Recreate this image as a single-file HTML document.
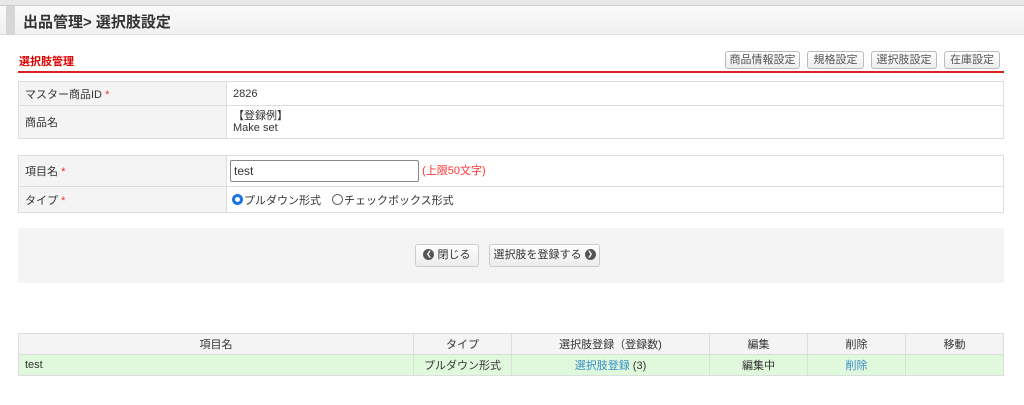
<!DOCTYPE html>
<html><head><meta charset="utf-8"><style>
*{box-sizing:border-box;margin:0;padding:0}
body{width:1024px;height:405px;background:#fff;font-family:"Liberation Sans","Noto Sans CJK JP",sans-serif;font-size:11px;color:#333;position:relative;overflow:hidden}
.abs{position:absolute}
.top{left:0;top:0;width:1024px;height:6px;background:#e8e8e8;border-bottom:1px solid #ccc}
.hdr{left:0;top:6px;width:1024px;height:29px;background:linear-gradient(#fafafa,#f0f0f0);border-bottom:1px solid #e0e0e0}
.hdr .mk{position:absolute;left:6px;top:0;width:9px;height:29px;background:#d6d6d6}
.hdr .t{position:absolute;left:23px;top:5px;font-size:15px;font-weight:bold;color:#333}
.sec{left:19px;top:53px;color:#d00;font-weight:bold;font-size:11px}
.red{left:18px;top:71px;width:986px;height:2px;background:#d22}
.tb{position:absolute;top:51px;height:18px;border:1px solid #bbb;border-radius:3px;background:linear-gradient(#fff,#ececec);font-size:11px;line-height:16px;text-align:center;color:#555}
table{position:absolute;border-collapse:collapse}
td{border:1px solid #ddd;padding:0 6px}
.lab{background:#f4f4f4;width:208px}
.star{color:#e33}
.panel{left:18px;top:228px;width:986px;height:55px;background:#f4f4f4}
.btn{position:absolute;top:244px;height:23px;border:1px solid #ccc;border-radius:3px;background:linear-gradient(#fff,#ececec);font-size:11px;line-height:21px;color:#333;white-space:nowrap;text-align:center}
.ic{display:inline-block;width:11px;height:11px;border-radius:50%;background:#555;color:#fff;font-size:7px;line-height:11px;text-align:center;vertical-align:middle;position:relative;top:-1px}
.t3 td{text-align:center;height:21px}
.t3 tr.h td{background:#f4f4f4;height:21px}
.t3 tr.d td{background:#e0f8dc}
a{color:#3a8fc8;text-decoration:none}
</style></head><body>
<div class="abs top"></div>
<div class="abs hdr"><div class="mk"></div><div class="t">出品管理&gt; 選択肢設定</div></div>
<div class="abs sec">選択肢管理</div>
<div class="abs red"></div>
<div class="tb" style="left:725px;width:75px">商品情報設定</div>
<div class="tb" style="left:807px;width:57px">規格設定</div>
<div class="tb" style="left:871px;width:66px">選択肢設定</div>
<div class="tb" style="left:944px;width:56px">在庫設定</div>

<table style="left:18px;top:81px;width:986px">
<tr style="height:24px"><td class="lab">マスター商品ID <span class="star">*</span></td><td>2826</td></tr>
<tr style="height:33px"><td class="lab">商品名</td><td style="line-height:12px">【登録例】<br>Make set</td></tr>
</table>

<table style="left:18px;top:155px;width:986px">
<tr style="height:31px"><td class="lab">項目名 <span class="star">*</span></td><td style="padding-left:3px"><span style="display:inline-block;width:189px;height:22px;border:1px solid #888;border-radius:2px;padding:3px 3px;font-size:12px;vertical-align:middle">test</span> <span style="color:#f33;font-size:11px">(上限50文字)</span></td></tr>
<tr style="height:26px"><td class="lab">タイプ <span class="star">*</span></td><td style="padding-left:5px"><span style="display:inline-block;width:11px;height:11px;border-radius:50%;border:3px solid #1a73e8;vertical-align:-1px;margin-right:1px"></span>プルダウン形式　<span style="display:inline-block;width:11px;height:11px;border-radius:50%;border:1px solid #666;vertical-align:-1px;margin-right:1px"></span>チェックボックス形式</td></tr>
</table>

<div class="abs panel"></div>
<div class="btn" style="left:415px;width:64px"><span class="ic">❮</span> 閉じる</div>
<div class="btn" style="left:489px;width:111px">選択肢を登録する <span class="ic">❯</span></div>

<table class="t3" style="left:18px;top:333px;width:986px">
<tr class="h"><td style="width:395px">項目名</td><td style="width:98px">タイプ</td><td style="width:198px">選択肢登録（登録数)</td><td style="width:98px">編集</td><td style="width:98px">削除</td><td>移動</td></tr>
<tr class="d"><td style="text-align:left">test</td><td>プルダウン形式</td><td><a>選択肢登録</a> (3)</td><td>編集中</td><td><a>削除</a></td><td></td></tr>
</table>
</body></html>
